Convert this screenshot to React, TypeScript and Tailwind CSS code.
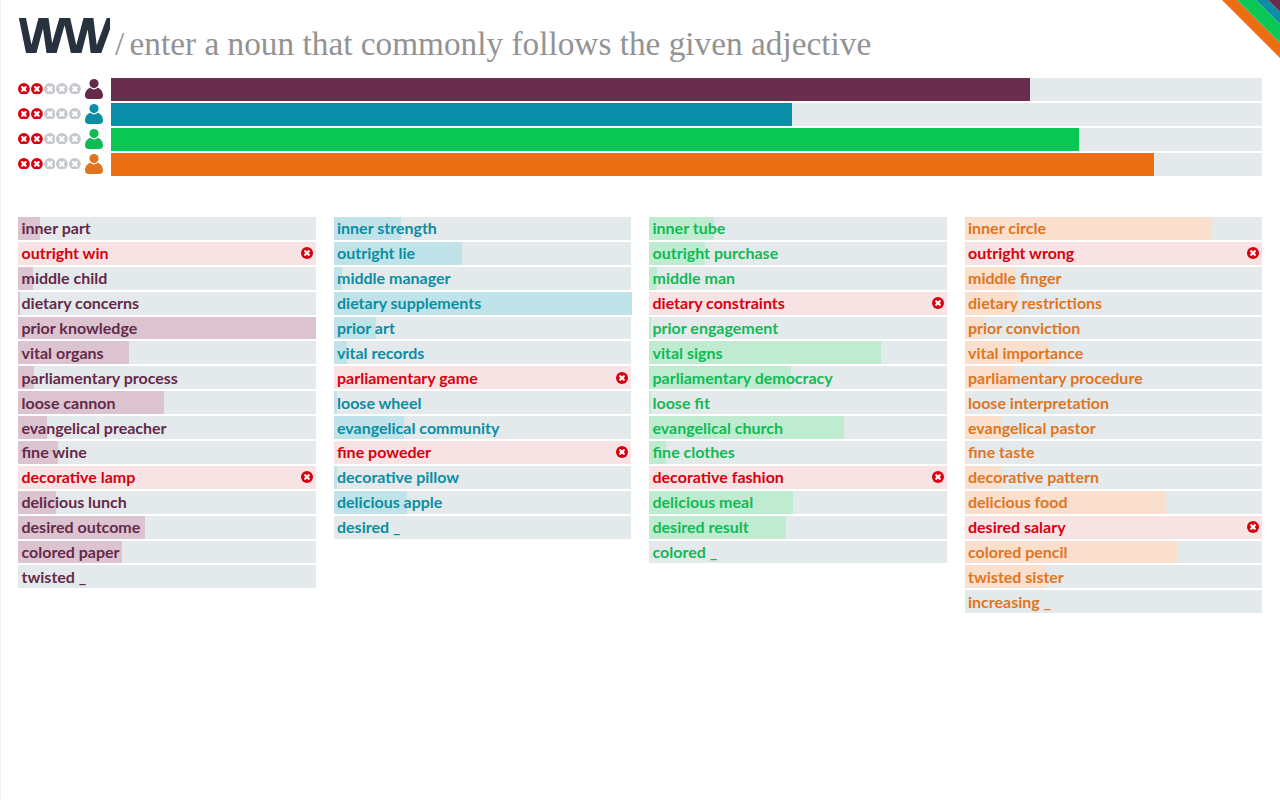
import { FC } from "react";

type Row = { text: string; fill?: number; wrong?: boolean };

type Player = {
  text: string;
  bar: string;
  tint: string;
  width: number;
  rows: Row[];
};

const players: Player[] = [
  {
    text: "text-[#642a49]",
    bar: "bg-[#6b2d4e]",
    tint: "bg-[#dcc3d0]",
    width: 919,
    rows: [
      { text: "inner part", fill: 22 },
      { text: "outright win", wrong: true },
      { text: "middle child", fill: 15 },
      { text: "dietary concerns", fill: 2 },
      { text: "prior knowledge", fill: 298 },
      { text: "vital organs", fill: 111 },
      { text: "parliamentary process", fill: 16 },
      { text: "loose cannon", fill: 146 },
      { text: "evangelical preacher", fill: 29 },
      { text: "fine wine", fill: 40 },
      { text: "decorative lamp", wrong: true },
      { text: "delicious lunch", fill: 38 },
      { text: "desired outcome", fill: 127 },
      { text: "colored paper", fill: 104 },
      { text: "twisted _" },
    ],
  },
  {
    text: "text-[#0b8ea3]",
    bar: "bg-[#0b8ea8]",
    tint: "bg-[#c0e3e9]",
    width: 681,
    rows: [
      { text: "inner strength", fill: 67 },
      { text: "outright lie", fill: 128 },
      { text: "middle manager", fill: 8 },
      { text: "dietary supplements", fill: 298 },
      { text: "prior art", fill: 42 },
      { text: "vital records", fill: 13 },
      { text: "parliamentary game", wrong: true },
      { text: "loose wheel", fill: 3 },
      { text: "evangelical community", fill: 70 },
      { text: "fine poweder", wrong: true },
      { text: "decorative pillow", fill: 3 },
      { text: "delicious apple", fill: 73 },
      { text: "desired _" },
    ],
  },
  {
    text: "text-[#10bb55]",
    bar: "bg-[#08c754]",
    tint: "bg-[#bfecd0]",
    width: 968,
    rows: [
      { text: "inner tube", fill: 65 },
      { text: "outright purchase", fill: 56 },
      { text: "middle man", fill: 8 },
      { text: "dietary constraints", wrong: true },
      { text: "prior engagement", fill: 2 },
      { text: "vital signs", fill: 232 },
      { text: "parliamentary democracy", fill: 142 },
      { text: "loose fit", fill: 2 },
      { text: "evangelical church", fill: 195 },
      { text: "fine clothes", fill: 17 },
      { text: "decorative fashion", wrong: true },
      { text: "delicious meal", fill: 144 },
      { text: "desired result", fill: 137 },
      { text: "colored _" },
    ],
  },
  {
    text: "text-[#e0751f]",
    bar: "bg-[#ec6e13]",
    tint: "bg-[#fbdfcd]",
    width: 1043,
    rows: [
      { text: "inner circle", fill: 247 },
      { text: "outright wrong", wrong: true },
      { text: "middle finger", fill: 50 },
      { text: "dietary restrictions", fill: 53 },
      { text: "prior conviction", fill: 19 },
      { text: "vital importance", fill: 85 },
      { text: "parliamentary procedure", fill: 48 },
      { text: "loose interpretation", fill: 2 },
      { text: "evangelical pastor", fill: 37 },
      { text: "fine taste", fill: 2 },
      { text: "decorative pattern", fill: 37 },
      { text: "delicious food", fill: 200 },
      { text: "desired salary", wrong: true },
      { text: "colored pencil", fill: 212 },
      { text: "twisted sister", fill: 80 },
      { text: "increasing _" },
    ],
  },
];

const Cross: FC<{ className: string }> = ({ className }) => (
  <svg viewBox="0 0 12 12" className={className}>
    <circle cx="6" cy="6" r="6" fill="currentColor" />
    <path d="M4.2 4.2l3.6 3.6M7.8 4.2l-3.6 3.6" stroke="#fff" strokeWidth="2.2" strokeLinecap="round" />
  </svg>
);

const Person: FC<{ className: string }> = ({ className }) => (
  <svg viewBox="0 0 18 20" className={className}>
    <circle cx="9" cy="4.6" r="4.6" fill="currentColor" />
    <path
      d="M0 16.5C0 12.5 2.5 9.5 5.5 8.8 6.5 10 7.7 10.5 9 10.5s2.5-.5 3.5-1.7C15.5 9.5 18 12.5 18 16.5 18 19 16.5 20 14 20H4C1.5 20 0 19 0 16.5Z"
      fill="currentColor"
    />
  </svg>
);

const App: FC = () => {
  return (
    <div className="relative min-h-[800px] overflow-hidden bg-white font-['Lato',sans-serif] shadow-[inset_1px_0_0_#efefef]">
      <svg viewBox="0 0 60 60" className="absolute right-0 top-0 h-[60px] w-[60px]">
        <polygon points="2,0 60,58 60,43 17,0" fill="#ec6e13" />
        <polygon points="17,0 60,43 60,24 36,0" fill="#08c754" />
        <polygon points="36,0 60,24 60,12 48,0" fill="#0b8ea8" />
        <polygon points="48,0 60,12 60,0" fill="#6b2d4e" />
      </svg>

      <div className="flex h-[78px] items-start pl-[18px] pt-[17px]">
        <svg viewBox="0 0 92 37" className="h-[37px] w-[92px]">
          <defs>
            <clipPath id="logo-box">
              <rect x="0" y="1" width="92" height="35" />
            </clipPath>
          </defs>
          <g clipPath="url(#logo-box)">
            <path
              d="M3 -6L13 43 26 -6 33 43 47 -6 58 43 71 -6 77 43 95 -6"
              fill="none"
              stroke="#28323f"
              strokeWidth="7"
              strokeLinejoin="miter"
              strokeMiterlimit="10"
            />
          </g>
        </svg>
        <span className="ml-[5px] mt-[5px] text-[33.3px] leading-[44px] text-[#939393] font-['Liberation_Serif',serif]">
          <span>/</span> <span className="-ml-[3px]">enter a noun that commonly follows the given adjective</span>
        </span>
      </div>

      <div className="flex flex-col gap-[2px] px-[18px]">
        {players.map((player, index) => (
          <div key={index} className="flex h-[23px] items-center">
            <div className="flex w-[93px] items-center">
              <div className="flex -translate-y-px gap-[1px]">
                {[0, 1, 2, 3, 4].map((dot) => (
                  <Cross
                    key={dot}
                    className={`h-[11.8px] w-[11.8px] ${dot < 2 ? "text-[#d7000f]" : "text-[#c5c9ce]"}`}
                  />
                ))}
              </div>
              <Person className={`ml-[4px] h-[20px] w-[18px] -translate-y-[1px] ${player.text}`} />
            </div>
            <div className="h-full flex-1 bg-[#e4e9ec]">
              <div className={`h-full ${player.bar}`} style={{ width: player.width }} />
            </div>
          </div>
        ))}
      </div>

      <div className="mt-[41px] grid grid-cols-4 items-start gap-x-[18px] px-[18px]">
        {players.map((player, index) => (
          <div key={index} className="flex flex-col gap-[2px]">
            {player.rows.map((row) => (
              <div
                key={row.text}
                className={`relative h-[22.9px] ${row.wrong ? "bg-[#f7e3e4]" : "bg-[#e4e9ec]"}`}
              >
                {row.fill ? (
                  <div className={`absolute inset-y-0 left-0 ${player.tint}`} style={{ width: row.fill }} />
                ) : null}
                <div
                  className={`relative flex h-full items-center justify-between pl-[3.5px] pr-[3px] text-[16px] font-bold ${
                    row.wrong ? "text-[#d7000f]" : player.text
                  }`}
                >
                  <span>{row.text}</span>
                  {row.wrong && <Cross className="h-[12px] w-[12px] text-[#d7000f]" />}
                </div>
              </div>
            ))}
          </div>
        ))}
      </div>
    </div>
  );
};

export default App;
